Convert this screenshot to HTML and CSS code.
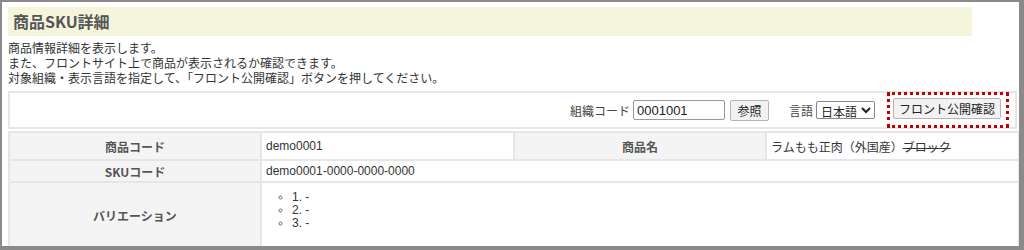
FILE: index.html
```html
<!DOCTYPE html>
<html lang="ja">
<head>
<meta charset="utf-8">
<link rel="stylesheet" href="styles.css">
</head>
<body>
<div class="frame">
  <div class="page">
    <h1 class="title">商品SKU詳細</h1>
    <div class="desc">
      <p>商品情報詳細を表示します。</p>
      <p>また、フロントサイト上で商品が表示されるか確認できます。</p>
      <p>対象組織・表示言語を指定して、「フロント公開確認」ボタンを押してください。</p>
    </div>
    <div class="toolbar">
      <span class="lbl">組織コード</span>
      <input class="code" type="text" value="0001001">
      <button class="btn ref">参照</button>
      <span class="lbl lang">言語</span>
      <select class="sel"><option>日本語</option></select>
      <span class="hl"><button class="btn front">フロント公開確認</button></span>
    </div>
    <table class="detail">
      <colgroup><col class="c1"><col class="c2"><col class="c3"><col class="c4"></colgroup>
      <tr class="r1">
        <th>商品コード</th>
        <td>demo0001</td>
        <th>商品名</th>
        <td>ラムもも正肉（外国産）<span class="strike">ブロック</span></td>
      </tr>
      <tr class="r2">
        <th>SKUコード</th>
        <td colspan="3">demo0001-0000-0000-0000</td>
      </tr>
      <tr class="r3">
        <th>バリエーション</th>
        <td colspan="3">
          <ul class="vars"><li>1. -</li><li>2. -</li><li>3. -</li></ul>
        </td>
      </tr>
    </table>
  </div>
</div>
</body>
</html>
```
FILE: styles.css
```css
html, body { margin: 0; padding: 0; background: #fff; }
body { font-family: "Noto Sans CJK JP", "Liberation Sans", sans-serif; color: #333; }
.frame {
  width: 1024px; height: 250px; box-sizing: border-box;
  border-style: solid; border-color: #8a8a8a;
  border-width: 2px 5px 4px 2px;
  overflow: hidden;
}
.page { padding: 5px 2px 0 6px; }
.title {
  margin: 0; width: 964px; height: 29px; box-sizing: border-box;
  background: #f5f5dc; color: #555;
  font-size: 16px; font-weight: bold; line-height: 29px;
  padding-left: 5px;
  font-family: "Noto Sans CJK JP", sans-serif;
}
.desc { margin-top: 4px; font-size: 12px; line-height: 15px; color: #333; }
.desc p { margin: 0; }
.toolbar {
  margin-top: 6px; height: 38px; box-sizing: border-box;
  border: 2px solid #e6e6e6;
  display: flex; align-items: center; justify-content: flex-end;
  padding-right: 9px; font-size: 12px; color: #444;
}
.lbl { margin-right: 3px; }
.code {
  width: 92px; height: 20px; box-sizing: border-box;
  border: 1px solid #999; border-radius: 2px; padding: 0 3px;
  font-family: "Liberation Sans", sans-serif; font-size: 13px; color: #222;
}
.btn {
  font-family: "Noto Sans CJK JP", sans-serif; font-size: 12px; color: #222;
  background: #f2f2f2; border: 1px solid #b5b5b5; border-radius: 2px;
  height: 21px; padding: 0 6px; line-height: 19px;
}
.ref { margin-left: 5px; width: 39px; }
.lang { margin-left: 20px; }
.sel {
  height: 18px; font-size: 12px; font-family: "Noto Sans CJK JP", sans-serif;
  border: 1px solid #888; border-radius: 2px; background: #fff; color: #222; padding: 0;
}
.hl {
  margin-left: 15px; outline: 3px dotted #c00000; outline-offset: 0;
  padding: 3px 5px 6px 3px; display: flex;
}
.front { width: 108px; padding: 0 4px; }
.detail {
  margin-top: 2px; width: 1010px; border-collapse: collapse; table-layout: fixed;
  font-size: 12px;
}
.c1 { width: 252px; } .c2 { width: 253px; } .c3 { width: 252px; } .c4 { width: 253px; }
.detail th, .detail td { border: 2px solid #e6e6e6; padding: 0 4px; }
.detail th { background: #f4f4f4; color: #555; font-weight: bold; text-align: center; }
.detail td { color: #333; font-family: "Liberation Sans", "Noto Sans CJK JP", sans-serif; text-align: left; }
.r1 th, .r1 td { height: 26px; }
.r2 th, .r2 td { height: 20px; }
.r3 th, .r3 td { height: 64px; vertical-align: middle; }
.r3 td { vertical-align: top; }
.strike { text-decoration: line-through; }
.vars { margin: 8px 0 0 0; padding-left: 26px; list-style: circle; line-height: 13px; }
.vars li::marker { color: #666; font-size: 10px; }
```
